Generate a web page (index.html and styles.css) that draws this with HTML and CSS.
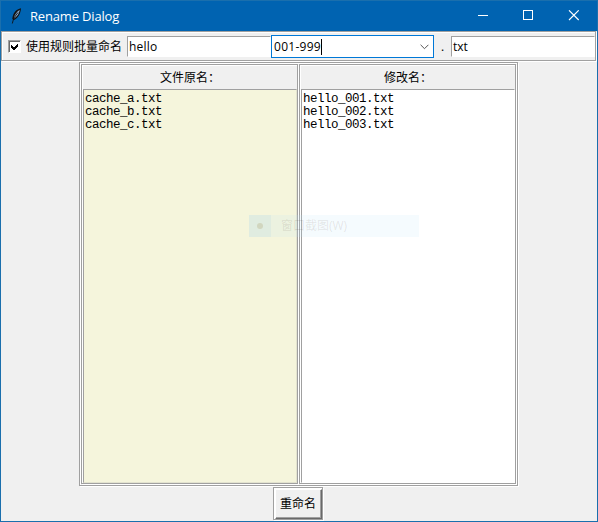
FILE: index.html
```html
<!DOCTYPE html>
<html lang="zh-CN">
<head>
<meta charset="utf-8">
<title>Rename Dialog</title>
<link rel="stylesheet" href="styles.css">
</head>
<body>
<div class="window">
  <header class="titlebar">
    <svg class="feather" width="12" height="16" viewBox="0 0 12 16">
      <path d="M11 .3C6.500 1 2.800 5 2.300 11l1.400 1.300C8 10 10.500 6 11 .3z" fill="#111"/>
      <path d="M9.800 1.800C6.500 4 4.200 7 3.900 10.800 7.500 8.300 9.200 5.500 9.800 1.800z" fill="#8eaed0"/>
      <path d="M8 4.500C5 8 3.200 11 2.300 15.500" fill="none" stroke="#111" stroke-width=".9"/>
    </svg>
    <h1 class="title">Rename Dialog</h1>
    <svg class="controls" width="104" height="12" viewBox="0 0 104 12" fill="none" stroke="#fff">
      <path d="M0 5.500h10"/>
      <rect x="45.500" y=".5" width="9" height="9"/>
      <path d="M91 .3l9.700 9.700M100.700.3L91 10" stroke-width="1.100"/>
    </svg>
  </header>
  <div class="toolbar groove">
    <span class="checkbox"><svg width="8" height="8" viewBox="0 0 8 8" shape-rendering="crispEdges"><path d="M0 2l2.500 2.500L7 0v3L2.500 7.500 0 5z" fill="#000"/></svg></span>
    <span class="label">使用规则批量命名</span>
    <div class="entry name">hello</div>
    <div class="combo"><span class="value">001-999</span><svg width="9" height="6" viewBox="0 0 9 6"><path d="M.6.8l3.900 3.900L8.400.8" fill="none" stroke="#555"/></svg></div>
    <span class="dot">.</span>
    <div class="entry ext">txt</div>
  </div>
  <main class="panels groove">
    <section class="panel groove">
      <h2 class="heading">文件原名：</h2>
      <div class="list original"><div>cache_a.txt</div><div>cache_b.txt</div><div>cache_c.txt</div></div>
    </section>
    <section class="panel groove">
      <h2 class="heading">修改名：</h2>
      <div class="list"><div>hello_001.txt</div><div>hello_002.txt</div><div>hello_003.txt</div></div>
    </section>
  </main>
  <footer class="actions groove"><div class="button">重命名</div></footer>
  <div class="ghost"><span class="ghost-icon"></span><span class="ghost-text">窗口截图(W)</span></div>
</div>
</body>
</html>
```
FILE: styles.css
```css
* { box-sizing: border-box; }
body { margin: 0; font: 12px/16px "Open Sans", "Noto Sans CJK SC", sans-serif; color: #000; }
.window { position: relative; display: flex; flex-direction: column; width: 598px; height: 522px; background: #f0f0f0; border: 1px solid #1a6fad; border-top: 0; overflow: hidden; }
.groove { border: 1px solid #a0a0a0; box-shadow: 1px 1px 0 #fff, inset 1px 1px 0 #fff; }
.titlebar { display: flex; align-items: center; flex: none; height: 31px; padding: 0 15px 0 9px; background: #0063b1; border-top: 1px solid #1a6fad; color: #fff; }
.title { margin: -1px auto 0 8px; font-size: 13px; font-weight: 400; letter-spacing: -.17px; }
.toolbar { display: flex; align-items: flex-start; flex: none; width: 595px; height: 30px; padding: 3px 0 0 6px; }
.checkbox { width: 13px; height: 13px; margin-top: 5px; padding: 1px 0 0 2px; background: #fff; border: 1px solid #a0a0a0; border-right-color: #fff; border-bottom-color: #fff; box-shadow: inset 1px 1px 0 #696969; line-height: 0; }
.checkbox svg { margin-top: 1px; }
.label { width: 106px; padding: 4px 0 0 5px; white-space: nowrap; }
.entry { height: 21px; margin-top: 1px; padding: 2px 1px; background: #fff; border: 1px solid #a0a0a0; border-right-color: #fff; border-bottom-color: #fff; }
.name { width: 144px; letter-spacing: .2px; }
.ext { width: 144px; }
.combo { display: flex; align-items: center; justify-content: space-between; width: 163px; height: 23px; padding: 0 4px 0 2px; background: #fff; border: 1px solid #0078d7; }
.value { border-right: 1px solid #000; letter-spacing: .28px; }
.dot { width: 17px; padding: 4px 0 0 7px; }
.panels { display: flex; gap: 1px; flex: none; width: 439px; height: 424px; margin: 1px 0 0 78px; padding: 1px; }
.panel { flex: none; width: 217px; padding: 1px 0 0 1px; }
.heading { height: 23px; margin: 0; padding: 4px 0 0; font-size: 12px; font-weight: 400; text-align: center; }
.list { height: 394px; padding: 3px 1px 0; background: #fff; border: 1px solid #a0a0a0; border-right-color: #fff; border-bottom-color: #fff; font: 12.5px/13px "Liberation Mono", monospace; letter-spacing: -.5px; }
.original { background: #f5f5dc; border-right-color: #e3e3cf; border-bottom-color: #e3e3cf; }
.actions { flex: none; width: 50px; height: 33px; margin: 1px 0 0 272px; padding: 1px 0 0 1px; }
.button { height: 30px; padding-top: 6px; border: 1px solid #fff; border-right-color: #696969; border-bottom-color: #696969; box-shadow: inset -1px -1px 0 #a0a0a0; text-align: center; text-indent: -1px; white-space: nowrap; }
.ghost { position: absolute; left: 248px; top: 215px; display: flex; width: 170px; height: 22px; background: rgba(185, 225, 245, .15); color: rgba(90, 70, 60, .13); }
.ghost-icon { display: flex; align-items: center; justify-content: center; width: 22px; background: rgba(150, 200, 225, .13); }
.ghost-icon::after { content: ""; width: 6px; height: 6px; border-radius: 50%; background: rgba(150, 130, 60, .2); }
.ghost-text { padding: 3px 0 0 10px; }
```
